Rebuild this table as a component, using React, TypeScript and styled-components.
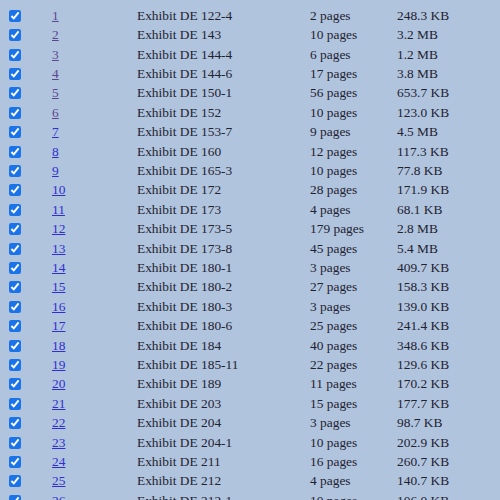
import React from "react";
import styled, { createGlobalStyle } from "styled-components";

const Global = createGlobalStyle`
  html, body { margin: 0; padding: 0; background: #b0c4de; }
  body { font-family: "Liberation Serif", "Times New Roman", serif; }
`;

const Page = styled.div`
  width: 500px;
  height: 500px;
  overflow: hidden;
  background: #b0c4de;
  padding-top: 6px;
  box-sizing: border-box;
`;

const Row = styled.div`
  display: grid;
  grid-template-columns: 52px 85px 173px 87px 1fr;
  align-items: center;
  height: 19.42px;
  font-size: 13.4px;
  color: #1f2230;
`;

const CheckCell = styled.div`
  display: flex;
  align-items: center;
  padding-left: 9px;
`;

const Check = styled.input`
  width: 12px;
  height: 12px;
  margin: 0;
  accent-color: #1a73e8;
`;

const NumLink = styled.a<{ $visited: boolean }>`
  color: ${(p) => (p.$visited ? "#5b4690" : "#2f2fd0")};
  text-decoration: underline;
  cursor: pointer;
`;

const Cell = styled.div`
  white-space: nowrap;
`;

const rows: [string, string, string][] = [
  ["122-4", "2 pages", "248.3 KB"],
  ["143", "10 pages", "3.2 MB"],
  ["144-4", "6 pages", "1.2 MB"],
  ["144-6", "17 pages", "3.8 MB"],
  ["150-1", "56 pages", "653.7 KB"],
  ["152", "10 pages", "123.0 KB"],
  ["153-7", "9 pages", "4.5 MB"],
  ["160", "12 pages", "117.3 KB"],
  ["165-3", "10 pages", "77.8 KB"],
  ["172", "28 pages", "171.9 KB"],
  ["173", "4 pages", "68.1 KB"],
  ["173-5", "179 pages", "2.8 MB"],
  ["173-8", "45 pages", "5.4 MB"],
  ["180-1", "3 pages", "409.7 KB"],
  ["180-2", "27 pages", "158.3 KB"],
  ["180-3", "3 pages", "139.0 KB"],
  ["180-6", "25 pages", "241.4 KB"],
  ["184", "40 pages", "348.6 KB"],
  ["185-11", "22 pages", "129.6 KB"],
  ["189", "11 pages", "170.2 KB"],
  ["203", "15 pages", "177.7 KB"],
  ["204", "3 pages", "98.7 KB"],
  ["204-1", "10 pages", "202.9 KB"],
  ["211", "16 pages", "260.7 KB"],
  ["212", "4 pages", "140.7 KB"],
  ["212-1", "10 pages", "106.0 KB"],
];

export default function App() {
  return (
    <>
      <Global />
      <Page>
        {rows.map(([de, pages, size], i) => (
          <Row key={i}>
            <CheckCell>
              <Check type="checkbox" defaultChecked />
            </CheckCell>
            <Cell>
              <NumLink $visited={i < 6}>{i + 1}</NumLink>
            </Cell>
            <Cell>Exhibit DE {de}</Cell>
            <Cell>{pages}</Cell>
            <Cell>{size}</Cell>
          </Row>
        ))}
      </Page>
    </>
  );
}
